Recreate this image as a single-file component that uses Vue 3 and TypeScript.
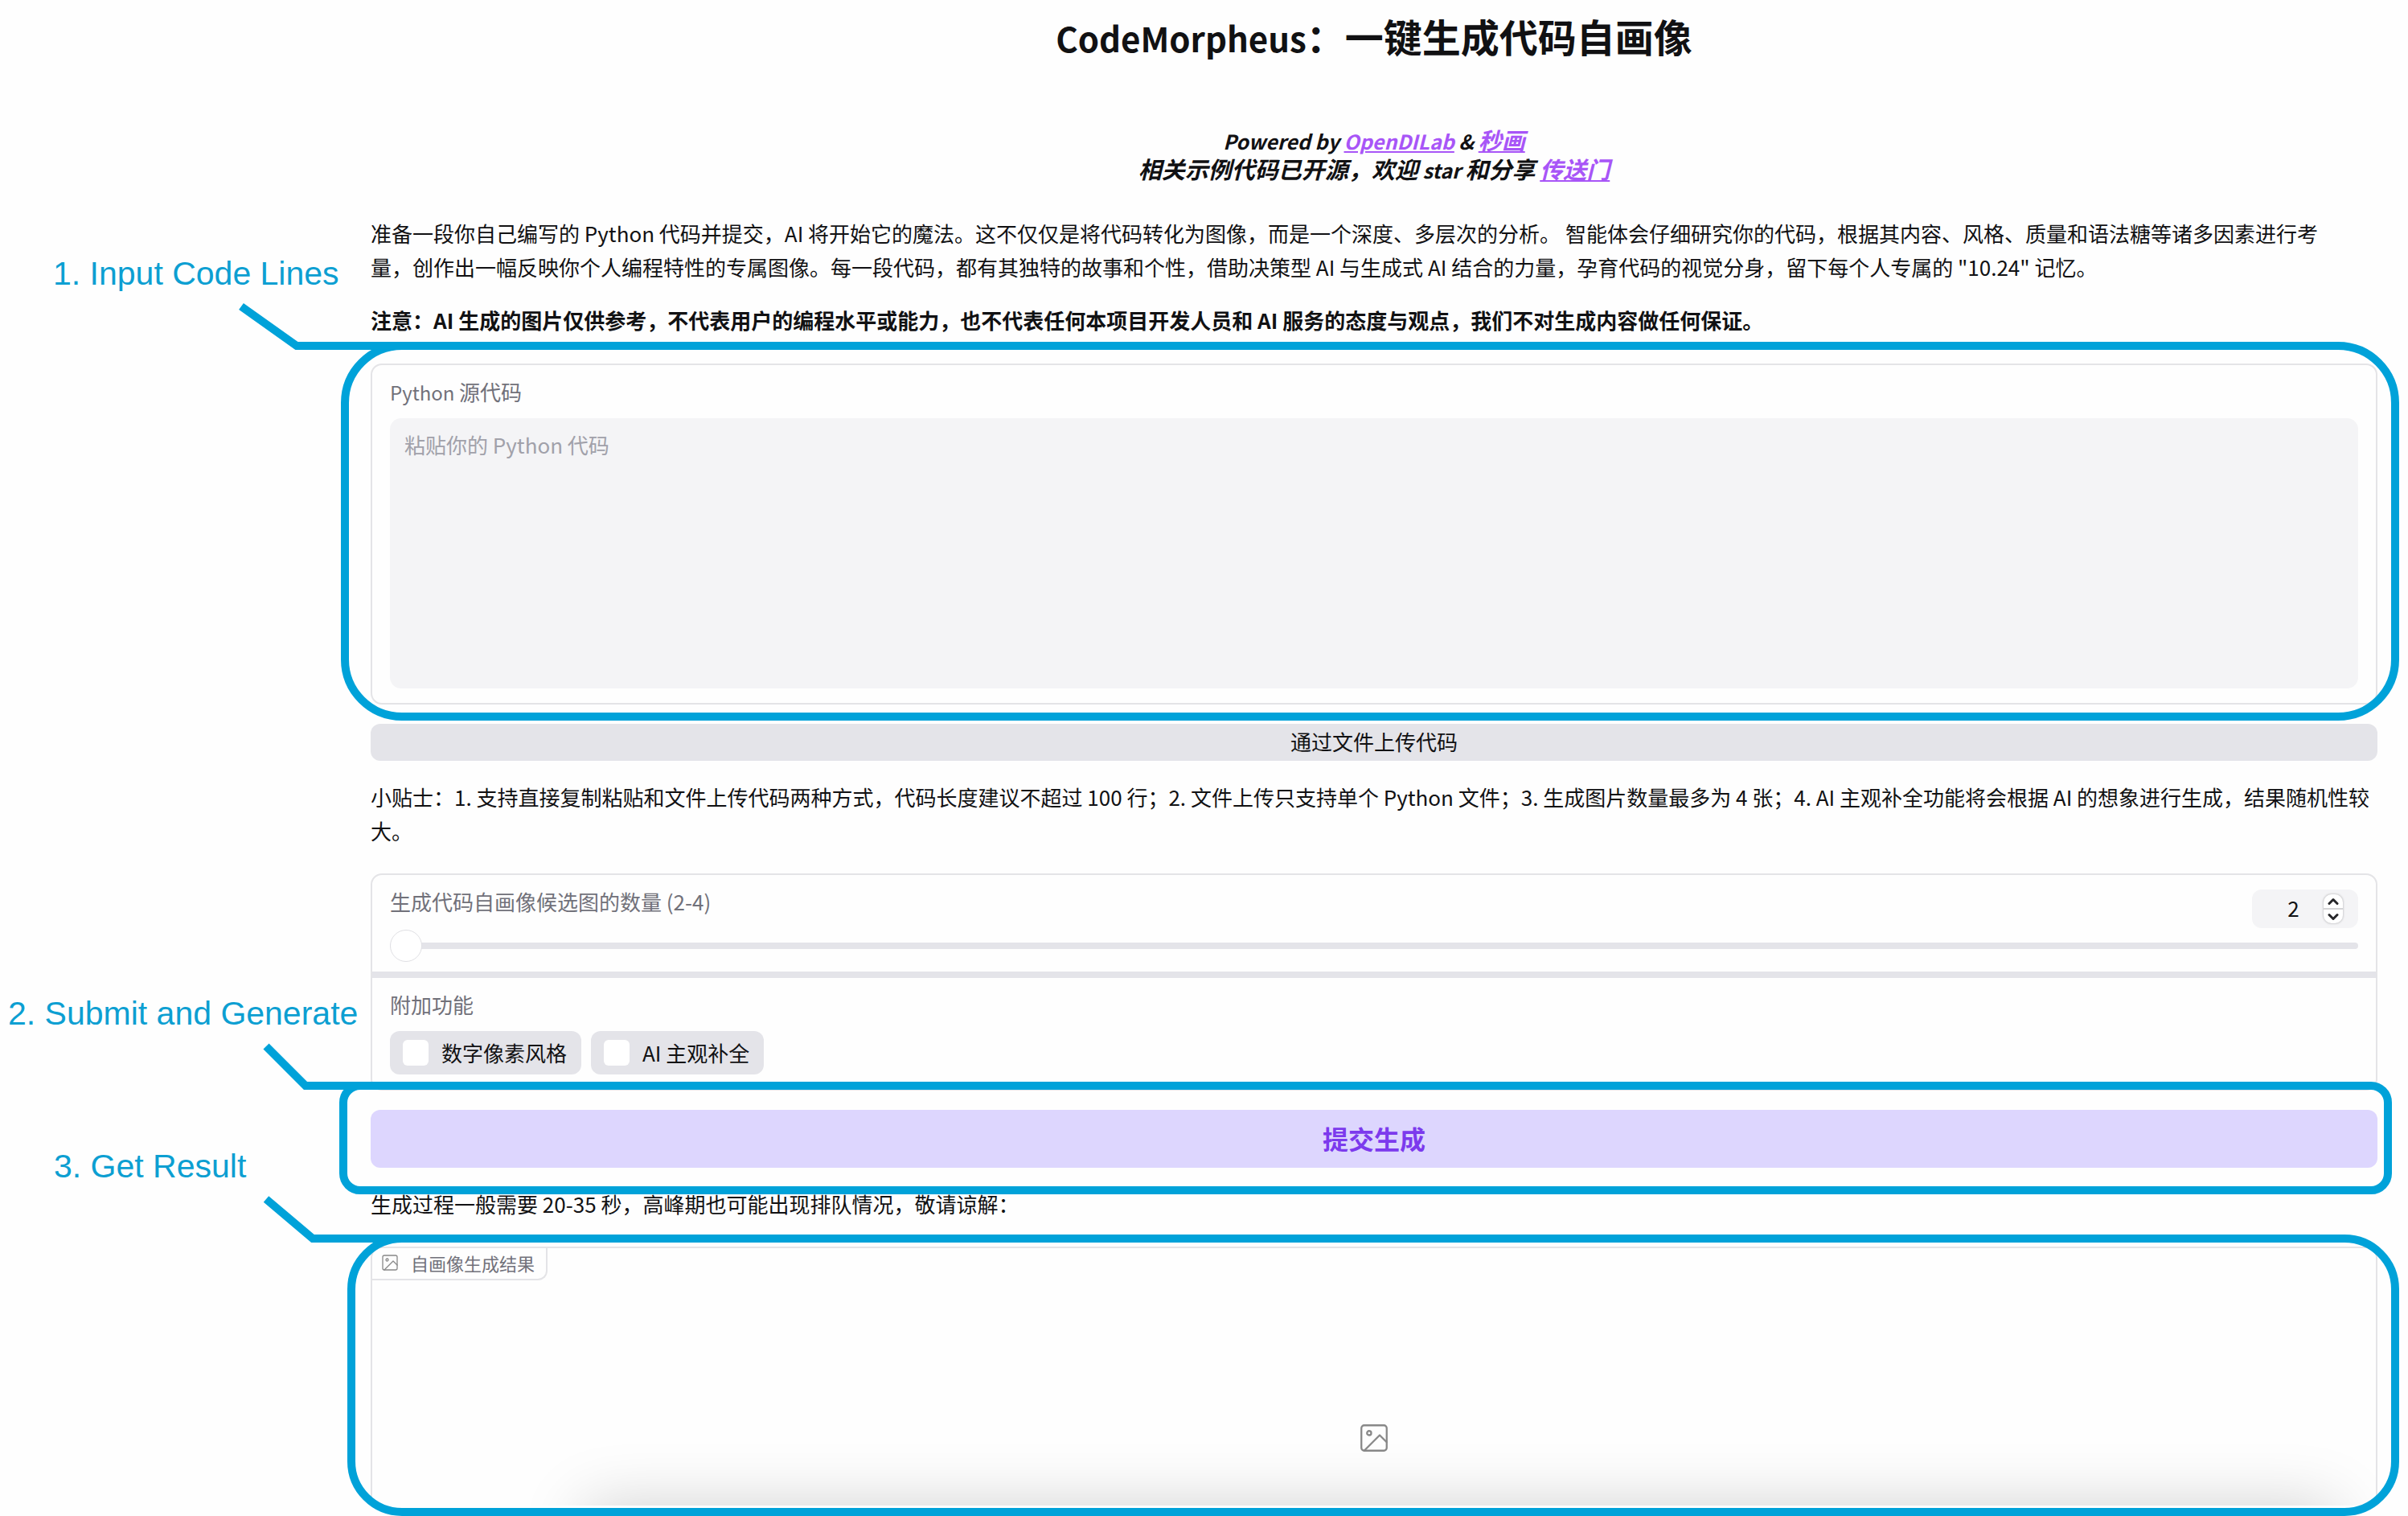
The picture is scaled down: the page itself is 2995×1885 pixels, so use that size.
<script setup lang="ts">
import { ref } from 'vue'

interface Option {
  id: string
  label: string
}

const code = ref('')
const count = ref(2)
const options: Option[] = [
  { id: 'pixel', label: '数字像素风格' },
  { id: 'completion', label: 'AI 主观补全' },
]
const selected = ref<string[]>([])

function step(delta: number) {
  count.value = Math.min(4, Math.max(2, count.value + delta))
}
</script>

<template>
  <main class="page">
    <h1 class="title"><span class="title-latin">CodeMorpheus</span>：一键生成代码自画像</h1>

    <p class="credits">
      <span class="credits-latin">Powered by <a href="#opendilab">OpenDILab</a> &amp; </span><a href="#miaohua">秒画</a><br />
      相关示例代码已开源，欢迎<span class="credits-latin"> star </span>和分享<span class="credits-latin">&nbsp;</span><a href="#repo">传送门</a>
    </p>

    <p class="text">
      准备一段你自己编写的 Python 代码并提交，AI 将开始它的魔法。这不仅仅是将代码转化为图像，而是一个深度、多层次的分析。 智能体会仔细研究你的代码，根据其内容、风格、质量和语法糖等诸多因素进行考<br />量，创作出一幅反映你个人编程特性的专属图像。每一段代码，都有其独特的故事和个性，借助决策型 AI 与生成式 AI 结合的力量，孕育代码的视觉分身，留下每个人专属的 "10.24" 记忆。
    </p>
    <p class="text strong">
      注意：AI 生成的图片仅供参考，不代表用户的编程水平或能力，也不代表任何本项目开发人员和 AI 服务的态度与观点，我们不对生成内容做任何保证。
    </p>

    <section class="step step-input">
      <div class="panel block">
        <label class="label" for="code"><span class="latin">Python </span>源代码</label>
        <textarea id="code" v-model="code" class="code" placeholder="粘贴你的 Python 代码"></textarea>
      </div>
      <div class="ring ring-input"></div>
      <svg class="leader leader-input" width="206" height="60" viewBox="0 0 206 60">
        <polyline points="6,6 75,55 206,55" />
      </svg>
      <span class="note note-input">1. Input Code Lines</span>
    </section>

    <button class="upload" type="button">通过文件上传代码</button>

    <p class="text">
      小贴士：1. 支持直接复制粘贴和文件上传代码两种方式，代码长度建议不超过 100 行；2. 文件上传只支持单个 Python 文件；3. 生成图片数量最多为 4 张；4. AI 主观补全功能将会根据 AI 的想象进行生成，结果随机性较<br />大。
    </p>

    <div class="panel settings">
      <div class="block block-slider">
        <div class="slider-head">
          <label class="label" for="count">生成代码自画像候选图的数量 (2-4)</label>
          <div class="number">
            <input v-model.number="count" type="number" min="2" max="4" aria-label="数量" />
            <span class="spinner">
              <button type="button" aria-label="增加" @click="step(1)">
                <svg width="14" height="10" viewBox="0 0 14 10"><path d="M2 7.500 7 2.500l5 5" /></svg>
              </button>
              <button type="button" aria-label="减少" @click="step(-1)">
                <svg width="14" height="10" viewBox="0 0 14 10"><path d="M2 2.500l5 5 5-5" /></svg>
              </button>
            </span>
          </div>
        </div>
        <input id="count" v-model.number="count" class="slider" type="range" min="2" max="4" />
      </div>
      <fieldset class="block">
        <legend class="label">附加功能</legend>
        <div class="options">
          <label v-for="option in options" :key="option.id" class="option">
            <input v-model="selected" type="checkbox" :value="option.id" />
            <span>{{ option.label }}</span>
          </label>
        </div>
      </fieldset>
    </div>

    <section class="step step-submit">
      <button class="submit" type="button">提交生成</button>
      <div class="ring ring-submit"></div>
      <svg class="leader leader-submit" width="206" height="60" viewBox="0 0 206 60">
        <polyline points="6,6 55,55 206,55" />
      </svg>
      <span class="note note-submit">2. Submit and Generate</span>
    </section>

    <p class="text">生成过程一般需要 20-35 秒，高峰期也可能出现排队情况，敬请谅解：</p>

    <section class="step step-result">
      <div class="panel result">
        <div class="result-label">
          <svg class="icon" width="24" height="24" viewBox="0 0 24 24">
            <rect x="3" y="3" width="18" height="18" rx="2" />
            <circle cx="8.500" cy="8.500" r="1.500" />
            <polyline points="21 15 16 10 5 21" />
          </svg>
          <span>自画像生成结果</span>
        </div>
        <svg class="icon result-icon" width="42" height="42" viewBox="0 0 24 24">
          <rect x="3" y="3" width="18" height="18" rx="2" />
          <circle cx="8.500" cy="8.500" r="1.500" />
          <polyline points="21 15 16 10 5 21" />
        </svg>
        <div class="shade"></div>
      </div>
      <div class="ring ring-result"></div>
      <svg class="leader leader-result" width="206" height="60" viewBox="0 0 206 60">
        <polyline points="6,6 64,55 206,55" />
      </svg>
      <span class="note note-result">3. Get Result</span>
    </section>
  </main>
</template>

<style>
body {
  margin: 0;
  background: #fefefe;
}
</style>

<style scoped>
.page {
  box-sizing: border-box;
  padding: 14px 38px 13px 461px;
  overflow: hidden;
  color: #111113;
  font-family: "Noto Sans CJK SC", sans-serif;
  font-size: 26px;
  line-height: 42px;
}

.page button,
.page input,
.page textarea {
  color: inherit;
  font-family: inherit;
  font-size: inherit;
}

.title {
  margin: 0 0 81px;
  font-size: 48px;
  font-weight: 700;
  line-height: 60px;
  text-align: center;
}

.title-latin {
  font-size: 42px;
  line-height: 42px;
}

.latin {
  font-size: 24px;
  line-height: 24px;
}

.credits {
  margin: 0 0 42px;
  font-size: 29px;
  font-style: italic;
  font-weight: 700;
  line-height: 36px;
  text-align: center;
}

.credits-latin {
  font-size: 25px;
  line-height: 25px;
}

.credits a {
  color: #a855f7;
  text-decoration: underline;
}

.text {
  margin: 0 0 24px;
}

.strong {
  font-weight: 700;
}

.step {
  position: relative;
}

.step-input {
  margin-top: 33px;
}

.settings,
.step-result {
  margin-top: 32px;
}

.panel {
  box-sizing: border-box;
  border: 2px solid #e4e4e7;
  border-radius: 14px;
}

.block {
  display: flex;
  flex-direction: column;
  margin: 0;
  padding: 18px 22px;
}

fieldset.block {
  min-width: 0;
  border: 0;
}

.label {
  padding: 0 0 4px;
  color: #71717a;
  line-height: 30px;
}

legend.label {
  float: left;
}

.code {
  box-sizing: border-box;
  width: 100%;
  height: 336px;
  margin: 14px 0 0;
  padding: 12px 18px;
  border: 0;
  border-radius: 14px;
  background: #f4f4f6;
  line-height: 42px;
  resize: none;
}

.code::placeholder {
  color: #a1a1aa;
  opacity: 1;
}

.upload,
.submit {
  display: block;
  width: 100%;
  padding: 0 0 2px;
  border: 0;
  border-radius: 12px;
}

.page .upload {
  height: 46px;
  margin: 24px 0;
  background: #e4e4e9;
  line-height: 42px;
}

.page .submit {
  height: 72px;
  margin: 24px 0;
  background: #ddd6fe;
  color: #7c3aed;
  font-size: 32px;
  font-weight: 700;
}

.block-slider {
  padding-bottom: 12px;
  border-bottom: 8px solid #e4e4e9;
}

.slider-head {
  display: flex;
  align-items: flex-start;
  justify-content: space-between;
}

.number {
  box-sizing: border-box;
  display: flex;
  align-items: center;
  width: 132px;
  height: 48px;
  padding: 0 19px 0 14px;
  border-radius: 12px;
  background: #f4f4f6;
}

.number input {
  box-sizing: border-box;
  flex: 1;
  min-width: 0;
  height: 48px;
  padding: 0 0 4px;
  border: 0;
  background: none;
  text-align: center;
  appearance: textfield;
}

.number input::-webkit-inner-spin-button {
  display: none;
}

.spinner {
  display: flex;
  flex-direction: column;
  gap: 2px;
  width: 24px;
  height: 36px;
  overflow: hidden;
  border-radius: 10px;
  background: #d4d4d6;
  box-shadow: 0 0 2px 1px #d0d0d2;
}

.spinner button {
  display: flex;
  flex: 1;
  align-items: center;
  justify-content: center;
  padding: 0;
  border: 0;
  background: #ffffff;
}

.spinner path {
  fill: none;
  stroke: #27272a;
  stroke-width: 3;
  stroke-linecap: round;
  stroke-linejoin: round;
}

.slider {
  width: 100%;
  height: 40px;
  margin: 2px 0 0;
  background: none;
  appearance: none;
}

.slider::-webkit-slider-runnable-track {
  height: 8px;
  border-radius: 4px;
  background: #e4e4e9;
}

.slider::-webkit-slider-thumb {
  box-sizing: border-box;
  width: 40px;
  height: 40px;
  margin-top: -16px;
  border: 1px solid #e0e0e4;
  border-radius: 50%;
  background: #ffffff;
  appearance: none;
}

.options {
  display: flex;
  gap: 12px;
  margin-top: 14px;
  clear: both;
}

.option {
  display: flex;
  align-items: center;
  gap: 16px;
  height: 54px;
  padding: 0 18px 0 16px;
  border-radius: 12px;
  background: #e4e4e9;
}

.option input {
  width: 32px;
  height: 32px;
  margin: 0;
  border-radius: 6px;
  background: #ffffff;
  appearance: none;
}

.option input:checked {
  background: #7c3aed;
}

.result {
  position: relative;
  height: 322px;
  overflow: hidden;
  border-bottom: 0;
  border-radius: 14px 14px 0 0;
}

.result-label {
  box-sizing: border-box;
  display: flex;
  align-items: center;
  gap: 14px;
  width: fit-content;
  height: 40px;
  padding: 0 14px 2px 10px;
  border-right: 2px solid #e4e4e7;
  border-bottom: 2px solid #e4e4e7;
  border-radius: 0 0 12px 0;
  color: #71717a;
  font-size: 22px;
  line-height: 32px;
}

.icon {
  fill: none;
  stroke: #888888;
  stroke-width: 1.300;
  stroke-linecap: round;
  stroke-linejoin: round;
}

.result-icon {
  display: block;
  margin: 175px auto 0;
}

.shade {
  position: absolute;
  right: 50px;
  bottom: -200px;
  left: 264px;
  height: 200px;
  box-shadow: 0 0 80px rgba(0, 0, 0, 0.18);
}

.ring {
  position: absolute;
  border: 10px solid #00a2d9;
  pointer-events: none;
}

.ring-input {
  inset: -27px -27px -20px -37px;
  border-radius: 76px;
}

.ring-submit {
  inset: -35px -18px -33px -39px;
  border-radius: 26px;
}

.ring-result {
  inset: -15px -27px -13px -29px;
  border-radius: 68px;
}

.leader {
  position: absolute;
  pointer-events: none;
}

.leader polyline {
  fill: none;
  stroke: #00a2d9;
  stroke-width: 10;
}

.leader-input {
  top: -77px;
  left: -167px;
}

.leader-submit {
  top: -85px;
  left: -136px;
}

.leader-result {
  top: -65px;
  left: -136px;
}

.note {
  position: absolute;
  color: #0c9fd2;
  font-family: "Liberation Sans", Arial, sans-serif;
  font-size: 41px;
  line-height: 48px;
  white-space: nowrap;
}

.note-input {
  top: -136px;
  left: -395px;
}

.note-submit {
  top: -144px;
  left: -451px;
}

.note-result {
  top: -124px;
  left: -394px;
}
</style>
